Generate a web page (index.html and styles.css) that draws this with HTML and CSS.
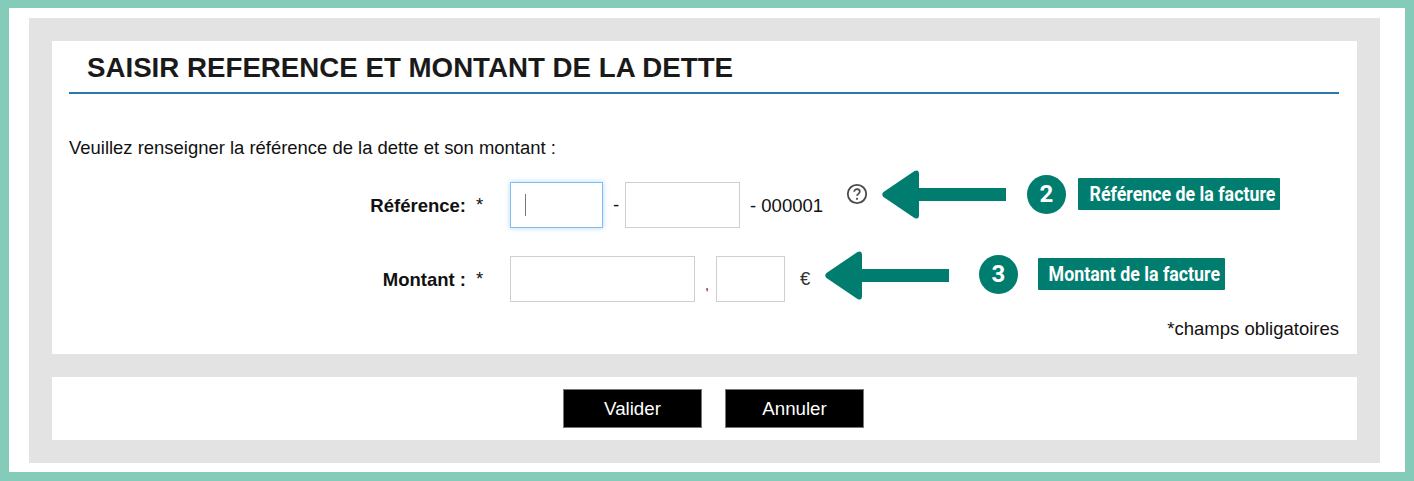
FILE: index.html
```html
<!DOCTYPE html>
<html lang="fr">
<head>
  <meta charset="UTF-8">
  <title>Saisir reference et montant de la dette</title>
  <link rel="stylesheet" href="styles.css">
</head>
<body>

<div class="frame">
  <div class="wrapper">
    <div class="panel form-panel">
      <h1 class="title">SAISIR REFERENCE ET MONTANT DE LA DETTE</h1>
      <p class="intro">Veuillez renseigner la référence de la dette et son montant :</p>

      <div class="row">
        <label class="row-label">Référence:</label>
        <span class="star">*</span>
        <input type="text" class="field field-focus field-ref1">
        <span class="sep sep-dash">-</span>
        <input type="text" class="field field-ref2">
        <span class="suffix">- 000001</span>
        <svg class="help" width="22" height="22" viewBox="0 0 22 22">
          <circle cx="11" cy="11" r="9.200" fill="none" stroke="#4a4a4a" stroke-width="1.800"/>
          <path d="M8.200 8.800c0-1.700 1.300-2.600 2.800-2.600s2.800.9 2.800 2.400c0 2.200-2.800 2.200-2.800 4.200" fill="none" stroke="#4a4a4a" stroke-width="1.700"/>
          <circle cx="11" cy="15.800" r="1.100" fill="#4a4a4a"/>
        </svg>
      </div>

      <div class="row">
        <label class="row-label">Montant :</label>
        <span class="star">*</span>
        <input type="text" class="field field-euros">
        <span class="sep sep-comma">,</span>
        <input type="text" class="field field-cents">
        <span class="suffix suffix-euro">€</span>
      </div>

      <p class="required">*champs obligatoires</p>
    </div>

    <div class="panel button-panel">
      <button class="btn">Valider</button>
      <button class="btn">Annuler</button>
    </div>
  </div>
</div>

<!-- annotations drawn over the form -->
<span class="caret"></span>

<svg class="arrow arrow-ref" width="125" height="51" viewBox="0 0 125 51">
  <path d="M125 19H38V5Q38 0 33.500 2L2.500 23Q0 25.500 2.500 28L33.500 49Q38 51 38 46V32H125Z" fill="#007d6f"/>
</svg>
<div class="bubble bubble-ref">2</div>
<div class="tag tag-ref"><span class="tag-text">Référence de la facture</span></div>

<svg class="arrow arrow-amount" width="125" height="51" viewBox="0 0 125 51">
  <path d="M125 19H38V5Q38 0 33.500 2L2.500 23Q0 25.500 2.500 28L33.500 49Q38 51 38 46V32H125Z" fill="#007d6f"/>
</svg>
<div class="bubble bubble-amount">3</div>
<div class="tag tag-amount"><span class="tag-text">Montant de la facture</span></div>

</body>
</html>
```

FILE: styles.css
```css
body {
  margin: 0;
  font-family: "Liberation Sans", Arial, sans-serif;
  background-color: #ffffff;
  color: #111111;
}
.frame {
  box-sizing: border-box;
  width: 1414px;
  height: 481px;
  border: solid #85cbb9; /* Teal frame */
  border-width: 8px 9px 9px 9px;
  padding: 10px 25px 9px 20px;
}
.wrapper {
  background-color: #e3e3e3;
  height: 445px;
  box-sizing: border-box;
  padding: 23px 23px;
}
.panel {
  background-color: #ffffff;
}
.form-panel {
  box-sizing: border-box;
  height: 313px;
  padding: 0 18px 0 17px;
  margin-bottom: 23px;
}
.title {
  margin: 0;
  box-sizing: border-box;
  height: 53px;
  padding: 12px 0 0 18px;
  font-size: 27.700px;
  line-height: 30px;
  font-weight: bold;
  color: #1a1a1a;
  border-bottom: 2px solid #2a78b0;
}
.intro {
  margin: 44px 0 0 0;
  font-size: 18.450px;
  line-height: 20px;
}
.row {
  display: flex;
  align-items: center;
  height: 46px;
  font-size: 18.500px;
}
.intro + .row {
  margin-top: 24px;
  margin-bottom: 28px;
}
.row-label {
  width: 397px;
  padding-top: 2px;
  text-align: right;
  font-weight: bold;
}
.star {
  width: 44px;
  padding-left: 10px;
  box-sizing: border-box;
}
.field {
  box-sizing: border-box;
  height: 46px;
  border: 1px solid #cfcfcf;
  background-color: #ffffff;
  padding: 0;
  margin: 0;
  outline: none;
}
.field-focus {
  border-color: #80bdf0;
  box-shadow: 0 0 5px rgba(102, 175, 233, 0.5);
}
.field-ref1 { width: 93px; }
.field-ref2 { width: 115px; }
.field-euros { width: 185px; }
.field-cents { width: 69px; }
.sep {
  text-align: center;
}
.sep-dash {
  width: 22px;
  padding-left: 4px;
  box-sizing: border-box;
}
.sep-comma {
  width: 21px;
  padding-left: 3px;
  box-sizing: border-box;
  font-size: 11px;
  font-weight: bold;
  color: #7a3030;
  padding-top: 14px;
}
.suffix {
  margin-left: 10px;
  padding-top: 1px;
}
.suffix-euro {
  margin-left: 15px;
  padding-top: 0;
  color: #333333;
}
.help {
  margin-left: 23px;
  margin-top: -23px;
}
.required {
  margin: 17px 0 0 0;
  text-align: right;
  font-size: 18.500px;
  line-height: 20px;
}
.button-panel {
  height: 63px;
  display: flex;
  justify-content: center;
  align-items: center;
  gap: 23px;
  padding-left: 18px;
}
.btn {
  width: 139px;
  height: 39px;
  background-color: #000000;
  color: #ffffff;
  border: 1px solid #777777;
  font-family: inherit;
  font-size: 18.700px;
  cursor: pointer;
}
.caret {
  position: absolute;
  left: 525px;
  top: 194px;
  width: 1px;
  height: 22px;
  background-color: #777777;
}
.arrow {
  position: absolute;
}
.arrow-ref { left: 881px; top: 169px; }
.arrow-amount { left: 824px; top: 250px; }
.bubble {
  position: absolute;
  width: 39px;
  height: 39px;
  border-radius: 50%;
  background-color: #007d6f;
  color: #ffffff;
  font-family: Roboto, sans-serif;
  font-weight: bold;
  font-size: 24px;
  line-height: 39px;
  text-align: center;
}
.bubble-ref { left: 1027px; top: 175px; }
.bubble-amount { left: 979px; top: 255px; }
.tag {
  position: absolute;
  box-sizing: border-box;
  height: 32px;
  padding-right: 5px;
  background-color: #007d6f;
  color: #ffffff;
  font-family: Roboto, sans-serif;
  font-weight: bold;
  font-size: 20px;
  line-height: 32px;
  text-align: center;
  border-radius: 1px;
  white-space: nowrap;
}
.tag-text {
  display: inline-block;
  transform: scaleX(0.89); /* the label font is narrower than Roboto */
}
.tag-ref { left: 1078px; top: 178px; width: 202px; }
.tag-amount { left: 1038px; top: 258px; width: 187px; }
```
